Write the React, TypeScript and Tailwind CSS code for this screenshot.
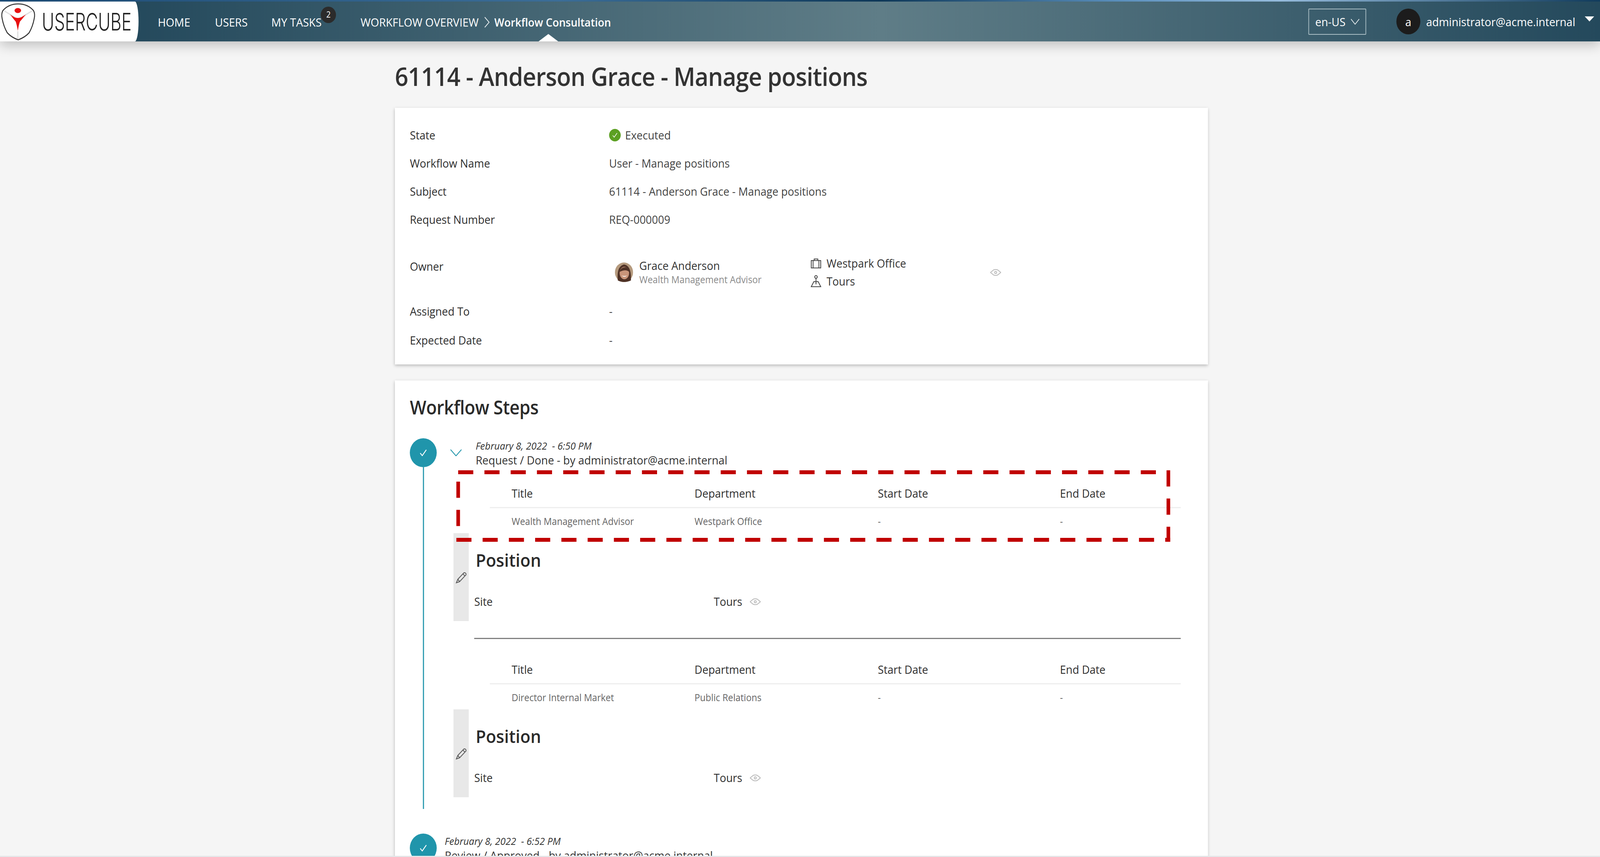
import React from "react";

const font = "[font-family:'Open_Sans','Noto_Sans',sans-serif]";

function Eye({ className = "" }: { className?: string }) {
  return (
    <svg viewBox="0 0 32 18" className={className} fill="none" stroke="#b8b8b8" strokeWidth="2.2">
      <path d="M1 9 L10 2 Q16 0 22 2 L31 9 L22 16 Q16 18 10 16 Z" />
      <circle cx="16" cy="9" r="3" />
    </svg>
  );
}

function Pencil() {
  return (
    <svg viewBox="0 0 30 30" className="w-[30px] h-[30px]" fill="none" stroke="#5a5a5a" strokeWidth="2.2">
      <path d="M2 28 L6 19 L22 3 Q25 1 28 4 Q30 7 27 9 L11 25 Z" />
      <path d="M20 5 L25 10 M6 19 L11 25" />
    </svg>
  );
}

function Row({ label, children, h = "h-[72px]" }: { label: string; children: React.ReactNode; h?: string }) {
  return (
    <div className={`flex items-center ${h}`}>
      <div className="w-[548px] text-[29.5px] font-medium text-[#2e2e2e]">{label}</div>
      <div className="text-[29.5px] text-[#444]">{children}</div>
    </div>
  );
}

function PosTable({ title, dept }: { title: string; dept: string }) {
  return (
    <div className="ml-[147px] mr-[75px]">
      <div className="pl-[60px] grid grid-cols-[503px_504px_501px_1fr] h-[72px] items-center border-b-[3px] border-[#eeeeee] text-[29.5px] font-medium text-[#2e2e2e]">
        <span>Title</span>
        <span>Department</span>
        <span>Start Date</span>
        <span>End Date</span>
      </div>
      <div className="pl-[60px] pt-[4px] grid grid-cols-[503px_504px_501px_1fr] items-center text-[25px] text-[#666] h-[64px]">
        <span>{title}</span>
        <span>{dept}</span>
        <span>-</span>
        <span>-</span>
      </div>
    </div>
  );
}

function PosBlock() {
  return (
    <div className="flex h-[225px] ml-[47px]">
      <div className="w-[42px] bg-[#e8e8e8] flex items-center justify-center shrink-0 pt-[2px]">
        <Pencil />
      </div>
      <div className="pl-[15px] flex flex-col flex-1">
        <div className="h-[120px] flex items-center pl-[4px] pt-[17px] text-[46px] font-semibold text-[#2a2a2a]">Position</div>
        <div className="flex items-center h-[70px] mt-[16px] pt-[8px] text-[29.5px] font-medium text-[#2e2e2e]">
          <span className="w-[659px]">Site</span>
          <span className="font-normal">Tours</span>
          <Eye className="w-[30px] h-[17px] ml-[21px]" />
        </div>
      </div>
    </div>
  );
}

function Check({ cls }: { cls: string }) {
  return (
    <svg viewBox="0 0 30 30" className={cls} fill="none" stroke="#fff" strokeWidth="2.4">
      <path d="M6 16 L12 23 L24 7" />
    </svg>
  );
}

export default function App() {
  const fit = Math.min(1, window.innerWidth / 4400);
  return (
    <div className="w-full h-[2194px] overflow-hidden">
      <div
        className={`relative w-[4400px] h-[2194px] overflow-hidden origin-top-left bg-[#f5f5f5] ${font}`}
        style={{ transform: `scaleX(${fit})` }}
      >
        <div className="h-[4px] bg-[linear-gradient(90deg,#1f4f7a_0%,#3f739f_35%,#0e3a5c_55%,#5f96c5_70%,#9cc4e6_80%,#123e60_100%)]" />
        <header className="relative z-10 h-[102px] flex items-center bg-[linear-gradient(90deg,#24495c_0%,#24495c_8%,#5f7d87_55%,#24495c_100%)] shadow-[0_10px_30px_rgba(0,0,0,0.22)] text-white text-[30px]">
          <div className="w-[381px] h-full bg-white [border-radius:0_10px_10px_0/0_50%_50%_0] flex items-center shrink-0">
            <svg viewBox="0 4 100 102" className="w-[100px] h-[102px] shrink-0" fill="none">
              <path d="M50 10 Q76 10 92 27 Q97 35 94 48 Q90 68 80 84 Q68 96 50 102 Q32 96 20 84 Q10 68 6 48 Q3 35 8 27 Q24 10 50 10 Z" stroke="#333" strokeWidth="2.6" />
              <path d="M12 28 L40 44 M88 28 L60 44 M49 80 L49 100" stroke="#dddddd" strokeWidth="3" />
              <ellipse cx="49" cy="27" rx="9" ry="6.5" fill="#e81010" />
              <path d="M28 37 Q40 46 49 46 Q58 46 71 37 Q60 50 55 55 Q52 62 49 79 Q46 62 43 55 Q38 50 28 37 Z" fill="#e81010" />
            </svg>
            <span className="inline-block ml-[15px] origin-left scale-x-[0.75] text-[62px] font-light text-[#222] [font-family:'Inter',sans-serif]">USERCUBE</span>
          </div>
          <nav className="flex items-center mt-[3px]">
            <span className="ml-[53px]">HOME</span>
            <span className="ml-[68px]">USERS</span>
            <span className="ml-[65px]">MY TASKS</span>
            <span className="relative">
              <span className="absolute -left-[2px] -top-[40px] w-[42px] h-[42px] rounded-full bg-[#2b2b2b] flex items-center justify-center text-[21px]">2</span>
            </span>
            <span className="ml-[107px]">WORKFLOW OVERVIEW</span>
            <svg viewBox="0 0 16 28" className="w-[16px] h-[28px] ml-[15px]" fill="none" stroke="#e8eef0" strokeWidth="2">
              <path d="M2 1 L14 14 L2 27" />
            </svg>
            <span className="ml-[12px] text-[29px] font-semibold">Workflow Consultation</span>
          </nav>
          <div className="absolute left-[1481px] bottom-0 w-0 h-0 border-l-[27px] border-r-[27px] border-b-[19px] border-l-transparent border-r-transparent border-b-white" />
          <div className="ml-auto flex items-center pr-[16px]">
            <div className="w-[159px] h-[67px] border-[2px] border-[#a9bdc4] rounded-[2px] flex items-center pl-[17px] mr-[83px]">
              <span>en-US</span>
              <svg viewBox="0 0 26 16" className="w-[25px] h-[15px] ml-[14px]" fill="none" stroke="#e8eef0" strokeWidth="2">
                <path d="M1 1 L13 15 L25 1" />
              </svg>
            </div>
            <div className="w-[66px] h-[66px] rounded-full bg-[#1c1c1c] flex items-center justify-center">a</div>
            <span className="ml-[16px]">administrator@acme.internal</span>
            <span className="ml-[26px] mb-[14px] w-0 h-0 border-l-[13px] border-r-[13px] border-t-[13px] border-l-transparent border-r-transparent border-t-white" />
          </div>
        </header>

        <main className="w-[2236px] ml-[1086px] relative">
          <h1 className="h-[170px] flex items-center pt-[8px] text-[64.5px] font-semibold text-[#333] tracking-[-1px]">61114 - Anderson Grace - Manage positions</h1>

          <section className="bg-white shadow-[0_3px_8px_rgba(0,0,0,0.25)] h-[657px] pl-[41px] pt-[34px]">
            <Row label="State">
              <span className="flex items-center">
                <span className="w-[32px] h-[32px] rounded-full bg-[#5ca022] flex items-center justify-center">
                  <Check cls="w-[20px] h-[20px]" />
                </span>
                <span className="ml-[12px]">Executed</span>
              </span>
            </Row>
            <Row label="Workflow Name">User - Manage positions</Row>
            <Row label="Subject">61114 - Anderson Grace - Manage positions</Row>
            <Row label="Request Number">REQ-000009</Row>
            <div className="flex items-center h-[130px] mt-[34px]">
              <div className="w-[564px] text-[29.5px] font-medium text-[#2e2e2e] -mt-[30px]">Owner</div>
              <svg viewBox="0 0 50 50" className="w-[50px] h-[50px] shrink-0">
                <circle cx="25" cy="25" r="25" fill="#b59a7e" />
                <path d="M8 46 Q4 10 25 5 Q46 8 44 46 Q25 54 8 46 Z" fill="#4f3226" />
                <ellipse cx="26" cy="27" rx="13" ry="16" fill="#c9957a" />
                <path d="M13 24 Q16 12 30 12 Q38 14 39 24 Q30 16 13 24 Z" fill="#4f3226" />
                <path d="M18 33 Q26 40 34 33 Q26 36 18 33 Z" fill="#fff" />
              </svg>
              <div className="ml-[17px] w-[471px] flex flex-col">
                <span className="text-[29.5px] text-[#333] leading-[36px]">Grace Anderson</span>
                <span className="text-[25px] text-[#8a8a8a] leading-[34px]">Wealth Management Advisor</span>
              </div>
              <div className="flex flex-col w-[494px]">
                <span className="flex items-center h-[46px] text-[29.5px] text-[#333]">
                  <svg viewBox="0 0 30 26" className="w-[30px] h-[26px] mr-[14px]" fill="none" stroke="#444" strokeWidth="2.2">
                    <path d="M2 6 H28 V25 H2 Z M7 6 V25 M23 6 V25 M10 6 V2 H20 V6" />
                  </svg>
                  Westpark Office
                </span>
                <span className="flex items-center h-[46px] text-[29.5px] text-[#333]">
                  <svg viewBox="0 0 30 32" className="w-[30px] h-[32px] mr-[14px]" fill="none" stroke="#444" strokeWidth="2.2">
                    <circle cx="15" cy="5" r="3.5" />
                    <path d="M15 9 V24 M9 17 H21 L28 30 H2 Z" />
                  </svg>
                  Tours
                </span>
              </div>
              <Eye className="w-[30px] h-[17px]" />
            </div>
            <Row label="Assigned To" h="h-[74px] -mt-[2px]">-</Row>
            <Row label="Expected Date" h="h-[74px]">-</Row>
          </section>

          <section className="mt-[41px] bg-white shadow-[0_3px_8px_rgba(0,0,0,0.25)] h-[1300px] pl-[41px]">
            <h2 className="h-[148px] pb-[10px] flex items-center text-[48px] font-semibold text-[#2a2a2a] tracking-[-0.5px]">Workflow Steps</h2>

            <div className="relative flex">
              <div className="flex flex-col items-center w-[74px] shrink-0">
                <div className="w-[74px] h-[74px] rounded-full bg-[#2095ab] flex items-center justify-center shrink-0">
                  <Check cls="w-[28px] h-[28px]" />
                </div>
                <div className="w-[3px] h-[875px] bg-[#2095ab] shrink-0" />
              </div>
              <div className="flex-1 -ml-[1px]">
                <div className="flex items-start">
                  <svg viewBox="0 0 32 18" className="w-[32px] h-[18px] ml-[38px] mt-[28px]" fill="none" stroke="#2095ab" strokeWidth="2.2">
                    <path d="M1 1 L16 17 L31 1" />
                  </svg>
                  <div className="ml-[38px]">
                    <div className="text-[26.3px] italic text-[#333] leading-[38px]">February 8, 2022&nbsp; - 6:50 PM</div>
                    <div className="text-[30px] text-[#333] leading-[36px]">Request / Done - by administrator@acme.internal</div>
                  </div>
                </div>
                <div className="mt-[33px]">
                  <PosTable title="Wealth Management Advisor" dept="Westpark Office" />
                  <PosBlock />
                  <div className="ml-[104px] mr-[75px] mt-[43px] h-[3px] bg-[#808080]" />
                  <div className="h-[44px]" />
                  <PosTable title="Director Internal Market" dept="Public Relations" />
                  <PosBlock />
                </div>
              </div>
            </div>

            <div className="flex mt-[63px]">
              <div className="w-[74px] h-[74px] rounded-full bg-[#2095ab] flex items-center justify-center shrink-0">
                <Check cls="w-[28px] h-[28px]" />
              </div>
              <div className="ml-[22px]">
                <div className="text-[26.3px] italic text-[#333] leading-[38px]">February 8, 2022&nbsp; - 6:52 PM</div>
                <div className="text-[30px] text-[#333] leading-[36px]">Review / Approved - by administrator@acme.internal</div>
              </div>
            </div>
          </section>
        </main>

        <svg className="absolute left-0 top-0 w-[4400px] h-[2194px] pointer-events-none" viewBox="0 0 4400 2194" fill="none" stroke="#c00000" strokeWidth="10" strokeDasharray="41.5 30.7">
          <line x1="1260" y1="1209" x2="3180" y2="1209" />
          <line x1="3213" y1="1204" x2="3213" y2="1387" />
          <line x1="1255" y1="1382" x2="3218" y2="1382" />
          <line x1="1260" y1="1233" x2="1260" y2="1350" />
        </svg>

        <div className="absolute left-0 bottom-0 w-full h-[3px] bg-[#e4e6e8]" />
      </div>
    </div>
  );
}
